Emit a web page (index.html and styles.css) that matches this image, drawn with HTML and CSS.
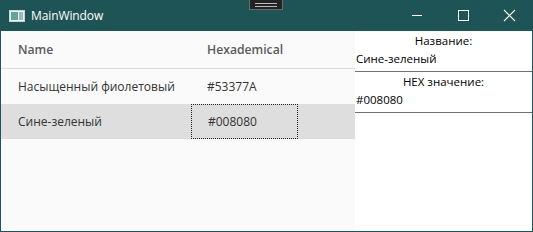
FILE: index.html
```html
<!DOCTYPE html>
<html lang="ru">
<head>
    <meta charset="UTF-8">
    <title>MainWindow</title>
    <link rel="stylesheet" href="styles.css">
</head>
<body>
    <div class="window">
        <!-- заголовок окна -->
        <div class="titlebar">
            <svg class="app-icon" width="16" height="12" viewBox="0 0 16 12">
                <rect x="0.5" y="0.5" width="15" height="11" fill="#e8f0f0" stroke="#c9d6d6"/>
                <rect x="2" y="2" width="7" height="8" fill="#5fa890"/>
                <rect x="10" y="2" width="4" height="8" fill="#9fb8c0"/>
            </svg>
            <span class="title">MainWindow</span>
            <div class="caption-btns">
                <svg class="cap-btn" width="46" height="31" viewBox="0 0 46 31">
                    <line x1="18" y1="15.5" x2="28" y2="15.5" stroke="#fff" stroke-width="1"/>
                </svg>
                <svg class="cap-btn" width="46" height="31" viewBox="0 0 46 31">
                    <rect x="18.5" y="10.5" width="10" height="10" fill="none" stroke="#fff" stroke-width="1"/>
                </svg>
                <svg class="cap-btn" width="46" height="31" viewBox="0 0 46 31">
                    <path d="M18 10 L29 21 M29 10 L18 21" stroke="#fff" stroke-width="1.1"/>
                </svg>
            </div>
            <div class="dev-grip"><span></span><span></span></div>
        </div>

        <div class="content">
            <div class="grid">
                <div class="grid-row grid-head">
                    <div class="cell name">Name</div>
                    <div class="cell hex">Hexademical</div>
                </div>
                <div class="grid-row">
                    <div class="cell name">Насыщенный фиолетовый</div>
                    <div class="cell hex">#53377A</div>
                </div>
                <div class="grid-row selected">
                    <div class="cell name">Сине-зеленый</div>
                    <div class="cell hex focused">#008080</div>
                </div>
            </div>

            <div class="details">
                <div class="label">Название:</div>
                <div class="value">Сине-зеленый</div>
                <div class="label">HEX значение:</div>
                <div class="value">#008080</div>
            </div>
        </div>
    </div>
</body>
</html>
```

FILE: styles.css
```css
body {
    margin: 0;
    font-family: "Open Sans", "Noto Sans", sans-serif;
}

.window {
    width: 533px;
    height: 232px;
    box-sizing: border-box;
    border: 1px solid #1f5457;
    border-top: none;
    display: flex;
    flex-direction: column;
    background: #fff;
}

.titlebar {
    position: relative;
    height: 31px;
    margin: 0 -1px;
    background: #1f5457;
    display: flex;
    align-items: center;
    color: #fff;
}

.app-icon {
    margin-left: 9px;
    margin-top: 1px;
}

.title {
    margin-left: 6px;
    font-size: 12px;
    letter-spacing: -0.1px;
}

.caption-btns {
    margin-left: auto;
    display: flex;
    margin-right: 1px;
}

.cap-btn {
    display: block;
}

.dev-grip {
    position: absolute;
    left: 249px;
    top: 0;
    width: 34px;
    height: 10px;
    box-sizing: border-box;
    background: #232323;
    border: 1px solid #6b6b6b;
    border-top: none;
    display: flex;
    flex-direction: column;
    justify-content: center;
    align-items: center;
    gap: 2px;
}

.dev-grip span {
    display: block;
    width: 22px;
    height: 1px;
    background: #bbb;
}

.content {
    flex: 1;
    display: flex;
}

.grid {
    width: 354px;
    background: #fafafa;
    font-size: 12px;
    color: #333;
}

.grid-row {
    display: flex;
    height: 35px;
}

.grid-head {
    height: 37px;
    border-bottom: 1px solid #dcdcdc;
    color: #5a5a5a;
    font-weight: 600;
    font-size: 12.2px;
}

.cell {
    display: flex;
    align-items: center;
    box-sizing: border-box;
}

.cell.name {
    width: 190px;
    padding-left: 17px;
}

.cell.hex {
    width: 107px;
    padding-left: 16px;
}

.selected {
    background: #dedede;
}

.focused {
    border: 1px dotted #222;
    padding-left: 15px;
}

.details {
    flex: 1;
    font-size: 11.5px;
    color: #000;
}

.label {
    height: 19px;
    line-height: 19px;
    text-align: center;
}

.value {
    height: 21px;
    line-height: 18px;
    border-bottom: 1px solid #707070;
    padding-left: 1px;
}
```
